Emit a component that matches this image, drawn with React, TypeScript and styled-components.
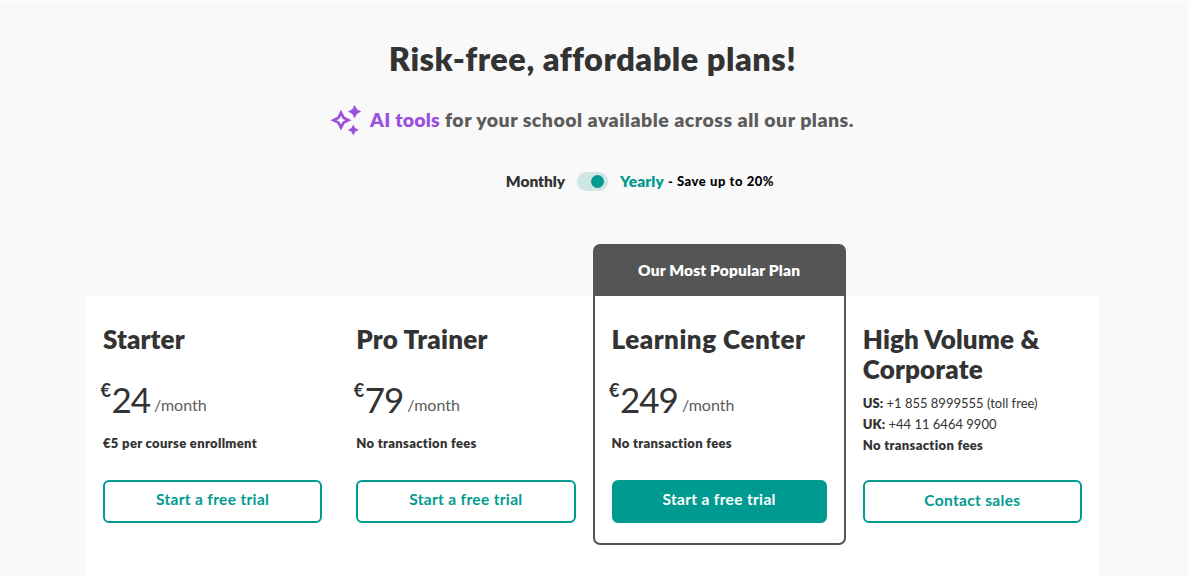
import React, { useState } from 'react';
import styled, { createGlobalStyle } from 'styled-components';

interface Plan {
  name: string;
  monthly?: number;
  yearly?: number;
  phones?: { country: string; number: string }[];
  note: string;
  nameSpacing: number;
  action: string;
  popular?: boolean;
}

const plans: Plan[] = [
  {
    name: 'Starter',
    nameSpacing: 0.1,
    monthly: 29,
    yearly: 24,
    note: '€5 per course enrollment',
    action: 'Start a free trial',
  },
  {
    name: 'Pro Trainer',
    nameSpacing: 0.25,
    monthly: 99,
    yearly: 79,
    note: 'No transaction fees',
    action: 'Start a free trial',
  },
  {
    name: 'Learning Center',
    nameSpacing: 0.5,
    monthly: 299,
    yearly: 249,
    note: 'No transaction fees',
    action: 'Start a free trial',
    popular: true,
  },
  {
    name: 'High Volume & Corporate',
    nameSpacing: 0.15,
    phones: [
      { country: 'US:', number: '+1 855 8999555 (toll free)' },
      { country: 'UK:', number: '+44 11 6464 9900' },
    ],
    note: 'No transaction fees',
    action: 'Contact sales',
  },
];

const App: React.FC = () => {
  const [yearly, setYearly] = useState(true);

  return (
    <Page>
      <GlobalStyle />
      <Title>Risk-free, affordable plans!</Title>
      <Subtitle>
        <Sparkles viewBox="0 0 30 30">
          <path
            fillRule="evenodd"
            d="M10 4.8 L13.6 11.8 L20.5 15.2 L13.6 18.6 L10 25.6 L6.4 18.6 L-0.5 15.2 L6.4 11.8 Z M10 10.8 L8.5 13.7 L5.6 15.2 L8.5 16.7 L10 19.6 L11.5 16.7 L14.4 15.2 L11.5 13.7 Z"
          />
          <path d="M23.6 0 L25.9 4.3 L30.2 6.6 L25.9 8.9 L23.6 13.2 L21.3 8.9 L17 6.6 L21.3 4.3 Z" />
          <path d="M22.3 19.4 L24.2 23 L27.8 24.9 L24.2 26.8 L22.3 30.4 L20.4 26.8 L16.8 24.9 L20.4 23 Z" />
        </Sparkles>
        <span>
          <Accent>AI tools</Accent> for your school available across all our plans.
        </span>
      </Subtitle>
      <Billing>
        <Period>Monthly</Period>
        <Toggle $on={yearly} onClick={() => setYearly(!yearly)} aria-label="Yearly billing">
          <Knob />
        </Toggle>
        <Period $active>Yearly</Period>
        <Saving>- Save up to 20%</Saving>
      </Billing>
      <Plans>
        {plans.map(plan => (
          <PlanCard key={plan.name} $popular={plan.popular}>
            {plan.popular && <Ribbon>Our Most Popular Plan</Ribbon>}
            <PlanBody>
              <PlanName $spacing={plan.nameSpacing}>{plan.name}</PlanName>
              {plan.phones ? (
                <Phones>
                  {plan.phones.map(phone => (
                    <div key={phone.country}>
                      <b>{phone.country}</b> {phone.number}
                    </div>
                  ))}
                </Phones>
              ) : (
                <Price>
                  <Currency>€</Currency>
                  <Amount>{yearly ? plan.yearly : plan.monthly}</Amount>
                  <Per>/month</Per>
                </Price>
              )}
              <Note>{plan.note}</Note>
              <Button $filled={plan.popular} $low={!!plan.phones}>{plan.action}</Button>
            </PlanBody>
          </PlanCard>
        ))}
      </Plans>
    </Page>
  );
};

const GlobalStyle = createGlobalStyle`
  body {
    margin: 0;
    background: #f9f9f9;
    font-family: Lato, "Open Sans", sans-serif;
    color: #333;
  }

  * {
    box-sizing: border-box;
  }
`;

const Page = styled.main`
  height: 576px;
  padding-top: 37px;
  border-top: 1px solid #fff;
  overflow: hidden;
  display: flex;
  flex-direction: column;
  align-items: center;
`;

const Title = styled.h1`
  margin: 0;
  padding-right: 3px;
  font-size: 32.5px;
  line-height: 42px;
  font-weight: 800;
  letter-spacing: 0.5px;
  white-space: nowrap;
`;

const Subtitle = styled.p`
  margin: 25px 3px 0 0;
  height: 31px;
  display: flex;
  align-items: center;
  gap: 9px;
  font-size: 19.5px;
  line-height: 30px;
  font-weight: 800;
  letter-spacing: 0.48px;
  color: #5c5c5c;
  white-space: nowrap;
`;

const Sparkles = styled.svg`
  width: 30px;
  height: 30px;
  overflow: visible;
  fill: #9b51e0;
`;

const Accent = styled.span`
  color: #9b51e0;
  letter-spacing: 0.2px;
`;

const Billing = styled.div`
  margin: 34px 0 0 92px;
  height: 24px;
  display: flex;
  align-items: center;
  white-space: nowrap;
`;

const Period = styled.span<{ $active?: boolean }>`
  font-size: 15.5px;
  line-height: 24px;
  font-weight: 800;
  letter-spacing: ${({ $active }) => ($active ? 0.1 : -0.05)}px;
  color: ${({ $active }) => ($active ? '#009b90' : '#333')};
`;

const Toggle = styled.button<{ $on: boolean }>`
  width: 31px;
  height: 19px;
  margin: 0 12px;
  padding: 0 4px;
  border: none;
  border-radius: 10px;
  display: flex;
  align-items: center;
  justify-content: ${({ $on }) => ($on ? 'flex-end' : 'flex-start')};
  background: #cfe6e3;
  cursor: pointer;
`;

const Knob = styled.span`
  width: 13px;
  height: 13px;
  border-radius: 50%;
  background: #009b90;
`;

const Saving = styled.span`
  margin-left: 4px;
  font-size: 13px;
  line-height: 24px;
  font-weight: 900;
  letter-spacing: 0.55px;
  color: #000;
`;

const Plans = styled.section`
  width: 1013px;
  height: 290px;
  margin: 103px 0 0 -3px;
  flex-shrink: 0;
  display: grid;
  grid-template-columns: repeat(4, 1fr);
  align-items: start;
  background: #fff;
`;

const PlanCard = styled.article<{ $popular?: boolean }>`
  ${({ $popular }) =>
    $popular &&
    `
    height: 301px;
    margin-top: -52px;
    border: 2px solid #555;
    border-radius: 7px;
    background: #fff;
  `}
`;

const Ribbon = styled.div`
  height: 50px;
  padding-bottom: 2px;
  display: flex;
  align-items: center;
  justify-content: center;
  background: #555;
  color: #fff;
  font-size: 15.5px;
  font-weight: 800;
  letter-spacing: 0.15px;
`;

const PlanBody = styled.div`
  padding: 29px 17px 0;
`;

const PlanName = styled.h2<{ $spacing: number }>`
  margin: 0;
  font-size: 26px;
  line-height: 29.5px;
  font-weight: 800;
  letter-spacing: ${({ $spacing }) => $spacing}px;
`;

const Price = styled.div`
  height: 78.5px;
  margin-left: -2.5px;
  padding-top: 23.5px;
  display: flex;
  white-space: nowrap;
`;

const Currency = styled.span`
  width: 11px;
  font-size: 18px;
  line-height: 25px;
  font-weight: 700;
`;

const Amount = styled.span`
  font-size: 35px;
  line-height: 42px;
  letter-spacing: -1px;
`;

const Per = styled.span`
  margin: 15px 0 0 4px;
  font-size: 16px;
  line-height: 24px;
  color: #5c5c5c;
`;

const Phones = styled.div`
  padding-top: 9px;
  font-size: 13px;
  line-height: 21px;
  white-space: nowrap;

  b {
    font-weight: 800;
  }
`;

const Note = styled.p`
  margin: 0;
  font-size: 13px;
  line-height: 21px;
  font-weight: 800;
  letter-spacing: 0.33px;
`;

const Button = styled.button<{ $filled?: boolean; $low?: boolean }>`
  width: 100%;
  height: 43px;
  margin-top: ${({ $low }) => ($low ? 24.4 : 25.7)}px;
  padding: 0 0 4px;
  border: 2px solid #009b90;
  border-radius: 6px;
  background: ${({ $filled }) => ($filled ? '#009b90' : '#fff')};
  color: ${({ $filled }) => ($filled ? '#fff' : '#009b90')};
  font-family: inherit;
  font-size: 15.5px;
  font-weight: 700;
  letter-spacing: 0.33px;
  cursor: pointer;
`;

export default App;
